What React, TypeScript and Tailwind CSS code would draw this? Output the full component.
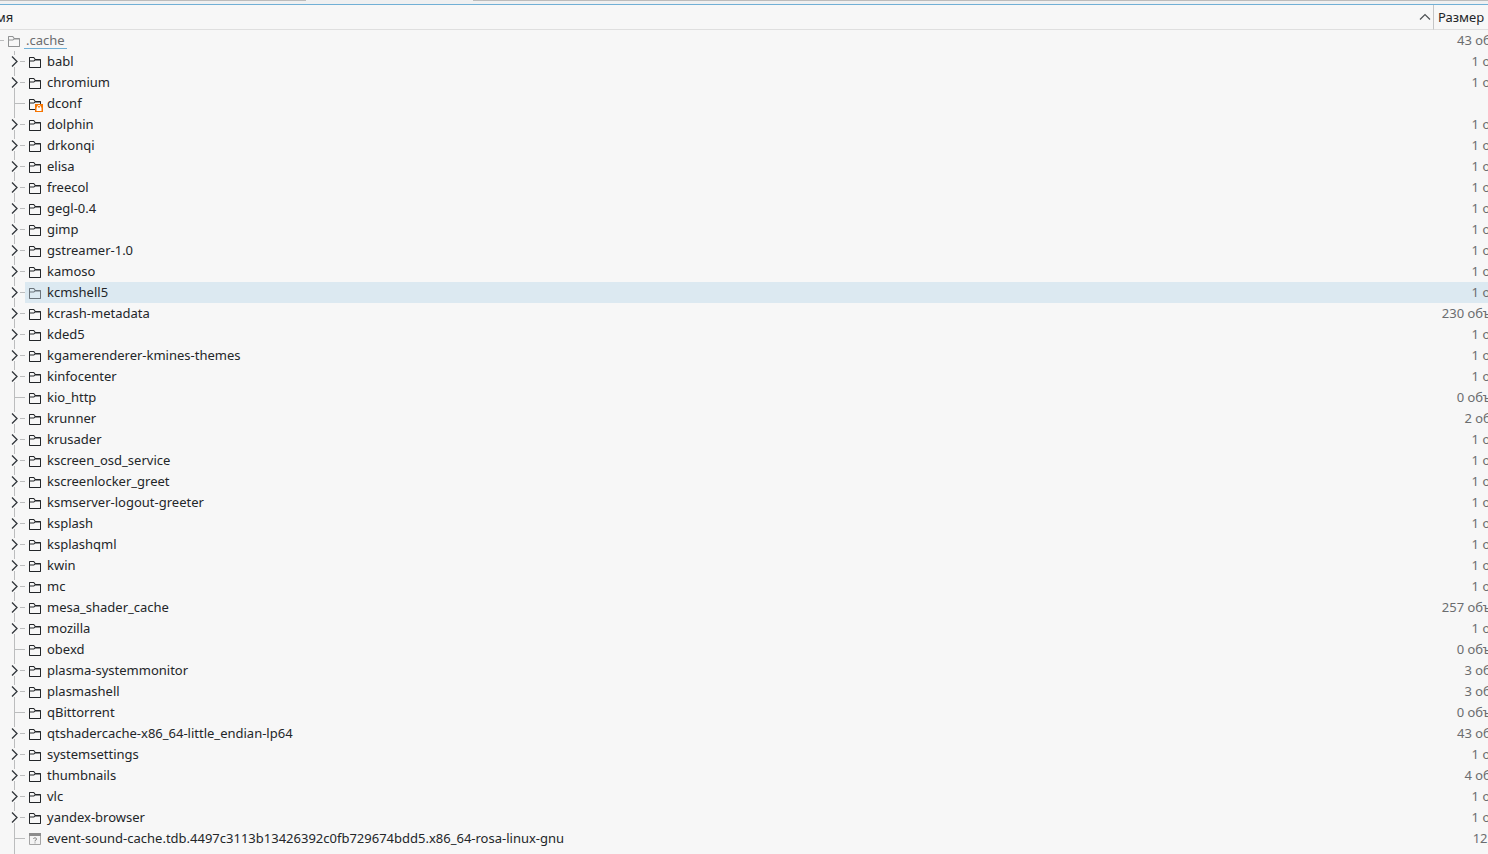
import { useState } from "react";
import clsx from "clsx";

type Kind = "expandable" | "leaf" | "locked" | "file";

interface Entry {
  name: string;
  size: string;
  kind?: Kind;
}

const ENTRIES: Entry[] = [
  { name: "babl", size: "1 объект" },
  { name: "chromium", size: "1 объект" },
  { name: "dconf", size: "", kind: "locked" },
  { name: "dolphin", size: "1 объект" },
  { name: "drkonqi", size: "1 объект" },
  { name: "elisa", size: "1 объект" },
  { name: "freecol", size: "1 объект" },
  { name: "gegl-0.4", size: "1 объект" },
  { name: "gimp", size: "1 объект" },
  { name: "gstreamer-1.0", size: "1 объект" },
  { name: "kamoso", size: "1 объект" },
  { name: "kcmshell5", size: "1 объект" },
  { name: "kcrash-metadata", size: "230 объектов" },
  { name: "kded5", size: "1 объект" },
  { name: "kgamerenderer-kmines-themes", size: "1 объект" },
  { name: "kinfocenter", size: "1 объект" },
  { name: "kio_http", size: "0 объектов", kind: "leaf" },
  { name: "krunner", size: "2 объекта" },
  { name: "krusader", size: "1 объект" },
  { name: "kscreen_osd_service", size: "1 объект" },
  { name: "kscreenlocker_greet", size: "1 объект" },
  { name: "ksmserver-logout-greeter", size: "1 объект" },
  { name: "ksplash", size: "1 объект" },
  { name: "ksplashqml", size: "1 объект" },
  { name: "kwin", size: "1 объект" },
  { name: "mc", size: "1 объект" },
  { name: "mesa_shader_cache", size: "257 объектов" },
  { name: "mozilla", size: "1 объект" },
  { name: "obexd", size: "0 объектов", kind: "leaf" },
  { name: "plasma-systemmonitor", size: "3 объекта" },
  { name: "plasmashell", size: "3 объекта" },
  { name: "qBittorrent", size: "0 объектов", kind: "leaf" },
  { name: "qtshadercache-x86_64-little_endian-lp64", size: "43 объекта" },
  { name: "systemsettings", size: "1 объект" },
  { name: "thumbnails", size: "4 объекта" },
  { name: "vlc", size: "1 объект" },
  { name: "yandex-browser", size: "1 объект" },
  {
    name: "event-sound-cache.tdb.4497c3113b13426392c0fb729674bdd5.x86_64-rosa-linux-gnu",
    size: "12,0 КиБ",
    kind: "file",
  },
];

const FolderIcon = ({ className, locked }: { className?: string; locked?: boolean }) => (
  <svg viewBox="0 0 16 16" className={clsx("mt-[3px] size-4 shrink-0", className)} aria-hidden="true">
    <path
      fill="currentColor"
      fillRule="evenodd"
      d="M2 3.5l.5-.5H7l1.5 2h5l.5.5v8l-.5.5h-11l-.5-.5zM3 4h3.5l1.2 1.6L6.7 6.5H3zM3 7.6h4l1.2-1H13V13H3z"
    />
    {locked && (
      <g>
        <path fill="#f67400" d="M8 8h8v8H8z" />
        <path fill="none" stroke="#fff" d="M10.5 12v-1.5q0-1 1.5-1t1.5 1V12" />
        <path fill="#fff" d="M9.5 11.5h5V15h-5z" />
      </g>
    )}
  </svg>
);

const FileIcon = () => (
  <svg viewBox="0 0 16 16" className="mt-[3px] size-4 shrink-0" aria-hidden="true">
    <path fill="#f4f4f4" stroke="#a5a5a5" d="M2.5 2.5h11v11h-11z" />
    <path fill="#8c8c8c" d="M2 2h12v3H2z" />
    <path fill="none" stroke="#8c8c8c" d="M6.5 8q0-1.2 1.5-1.2T9.5 8 8 9.6v.9M8 11.4v1" />
  </svg>
);

// Connector lines left of the icons, with the expander arrow on top of them
const Branch = ({ expandable, name }: { expandable: boolean; name: string }) => {
  const lines = (
    <svg viewBox="0 0 25 21" className="h-[21px] w-[25px]" fill="none" aria-hidden="true">
      {expandable ? (
        <>
          <path stroke="#bcbdbe" d="M14.5 0v4M14.5 16v5M20 10.5h5" />
          <path stroke="#31363b" strokeWidth="1.3" d="M12 5.5l5 5-5 5" />
        </>
      ) : (
        <path stroke="#bcbdbe" d="M14.5 0v21M15 10.5h10" />
      )}
    </svg>
  );
  if (!expandable) return lines;
  return (
    <button type="button" aria-label={name} className="shrink-0">
      {lines}
    </button>
  );
};

const SizeCell = ({ size, active }: { size: string; active?: boolean }) => (
  <td
    className={clsx(
      "p-0 pr-0.5 text-right align-top whitespace-nowrap text-[#6b6d6f]",
      active && "bg-[#dce9f1]"
    )}
  >
    {size}
  </td>
);

const Row = ({ entry, active, onHover }: { entry: Entry; active: boolean; onHover: () => void }) => {
  const kind = entry.kind ?? "expandable";
  return (
    <tr onMouseEnter={onHover} className="h-[21px]">
      <td className="p-0">
        <div className="flex h-[21px]">
          <Branch expandable={kind === "expandable"} name={entry.name} />
          <div
            className={clsx(
              "flex flex-1 items-start gap-1 pl-0.5 whitespace-nowrap",
              active && "bg-[#dce9f1]"
            )}
          >
            {kind === "file" ? (
              <FileIcon />
            ) : (
              <FolderIcon
                locked={kind === "locked"}
                className={active ? "text-[#6b747b]" : "text-[#232629]"}
              />
            )}
            <span>{entry.name}</span>
          </div>
        </div>
      </td>
      <SizeCell size={entry.size} active={active} />
    </tr>
  );
};

export default function App() {
  const [active, setActive] = useState("kcmshell5");

  return (
    <div className="flex h-screen flex-col overflow-hidden bg-[#f7f7f7] font-['Noto_Sans',sans-serif] text-[13px] leading-5 text-[#232629]">
      <div className="flex h-[5px] shrink-0 border-b border-[#71b0d6] bg-[#eff0f1]">
        <div className="h-px w-[306px] bg-[#bcbcbc]" />
        <div className="ml-[167px] h-px flex-1 bg-[#bcbcbc]" />
      </div>
      <table className="w-[calc(100%+40px)] shrink-0 table-fixed border-collapse">
        <colgroup>
          <col />
          <col className="w-[95px]" />
        </colgroup>
        <thead>
          <tr>
            <th className="p-0 font-normal">
              <div className="flex h-[25px] items-center justify-between border-b border-[#dfdfdf]">
                <span className="-ml-3.5">Имя</span>
                <svg viewBox="0 0 12 8" className="mr-0.5 h-2 w-3" fill="none" aria-hidden="true">
                  <path stroke="#4d5154" strokeWidth="1.2" d="M1 6.5l5-5 5 5" />
                </svg>
              </div>
            </th>
            <th className="p-0 font-normal">
              <div className="flex h-[25px] items-center border-b border-l border-b-[#dfdfdf] border-l-[#c4c5c6] pl-1">
                Размер
              </div>
            </th>
          </tr>
        </thead>
        <tbody>
          <tr className="h-[21px]">
            <td className="p-0">
              <div className="flex h-[21px] items-start">
                <span className="mt-2.5 h-px w-1 bg-[#bcbdbe]" />
                <FolderIcon className="ml-0.5 text-[#919394]" />
                <a href="#cache" className="ml-0.5 h-[19px] border-b border-[#71b0d6] px-0.5 text-[#6b6d6f]">
                  .cache
                </a>
              </div>
            </td>
            <SizeCell size="43 объекта" />
          </tr>
          {ENTRIES.map((entry) => (
            <Row
              key={entry.name}
              entry={entry}
              active={entry.name === active}
              onHover={() => setActive(entry.name)}
            />
          ))}
        </tbody>
      </table>
      <div className="ml-3.5 w-px flex-1 bg-[#bcbdbe]" />
    </div>
  );
}
